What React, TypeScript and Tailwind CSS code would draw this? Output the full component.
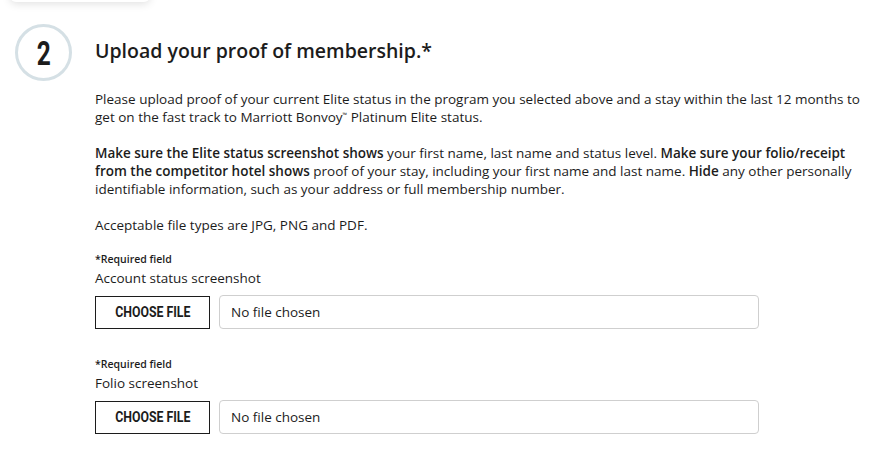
export default function App() {
  return (
    <div className="relative w-[888px] h-[449px] overflow-hidden bg-white text-[#1c1c1c] font-['Open_Sans','Liberation_Sans',sans-serif]">
      {/* shadow of the card above */}
      <div className="absolute left-[10px] top-[-20px] h-[22px] w-[140px] rounded-b-md bg-white shadow-[0_2px_8px_rgba(0,0,0,0.12)]" />

      <div className="flex pt-[24px] pl-[15px]">
        <div className="flex h-[57px] w-[57px] shrink-0 items-center justify-center rounded-full border-[3px] border-[#d5e0e5]">
          <span className="inline-block scale-x-[0.72] font-['Roboto',sans-serif] text-[34px] font-bold leading-none">2</span>
        </div>

        <div className="ml-[23px] w-[765px]">
          <h2 className="mt-[14px] text-[19.5px] font-semibold leading-[26px]">Upload your proof of membership.*</h2>

          <div className="mt-[26px] text-[13.5px] leading-[18px]">
            <p>
              Please upload proof of your current Elite status in the program you selected above and a stay within the last 12 months to get on the fast track to Marriott Bonvoy<span className="relative top-[-5px] text-[6px] leading-none">™</span> Platinum Elite status.
            </p>
            <p className="mt-[18px]">
              <b className="font-semibold">Make sure the Elite status screenshot shows</b> your first name, last name and status level. <b className="font-semibold">Make sure your folio/receipt from the competitor hotel shows</b> proof of your stay, including your first name and last name. <b className="font-semibold">Hide</b> any other personally identifiable information, such as your address or full membership number.
            </p>
            <p className="mt-[18px]">Acceptable file types are JPG, PNG and PDF.</p>
          </div>

          <FileField label="Account status screenshot" className="mt-[17px]" />
          <FileField label="Folio screenshot" className="mt-[27px]" />
        </div>
      </div>
    </div>
  )
}

function FileField({ label, className }: { label: string; className?: string }) {
  return (
    <div className={className}>
      <div className="text-[10.5px] font-semibold leading-[16px]">*Required field</div>
      <div className="mt-[2px] text-[13.5px] leading-[18px]">{label}</div>
      <div className="mt-[8px] flex items-center gap-[9px]">
        <button className="flex h-[33px] w-[115px] items-center justify-center border border-[#1c1c1c] bg-white">
          <span className="inline-block scale-x-[0.88] font-['Roboto',sans-serif] text-[14px] font-bold leading-none">CHOOSE FILE</span>
        </button>
        <div className="flex h-[34px] w-[540px] items-center rounded-[4px] border border-[#cfcfcf] px-[11px] text-[13.5px]">
          No file chosen
        </div>
      </div>
    </div>
  )
}
